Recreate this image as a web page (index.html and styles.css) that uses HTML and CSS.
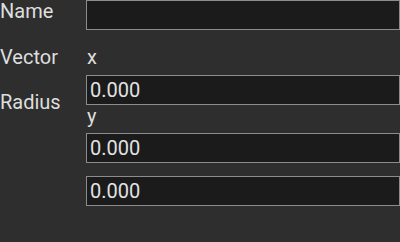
FILE: index.html
```html
<!DOCTYPE html>
<html lang="en">
<head>
    <meta charset="UTF-8">
    <meta name="viewport" content="width=device-width, initial-scale=1.0">
    <title>Properties</title>
    <link rel="stylesheet" href="styles.css">
</head>
<body>
    <div class="props">
        <!-- Label column -->
        <div class="labels">
            <label class="label label-name" for="nameField">Name</label>
            <label class="label label-vector">Vector</label>
            <label class="label">Radius</label>
        </div>

        <!-- Field column -->
        <div class="fields">
            <input class="field field-name" type="text" id="nameField" value="">
            <span class="axis axis-x">x</span>
            <input class="field" type="text" id="vecX" value="0.000">
            <span class="axis axis-y">y</span>
            <input class="field field-y" type="text" id="vecY" value="0.000">
            <input class="field" type="text" id="radius" value="0.000">
        </div>
    </div>
</body>
</html>
```

FILE: styles.css
```css
body {
    margin: 0;
    padding: 0;
    background-color: #2e2e2e;
    font-family: Roboto, "Liberation Sans", sans-serif;
    font-size: 20px;
    color: #dedede;
}
.props {
    display: grid;
    grid-template-columns: 86px 314px;
}
.labels {
    display: flex;
    flex-direction: column;
}
.label {
    line-height: 23px;
}
.label-name {
    height: 30px;
    margin-bottom: 16px;
}
.label-vector {
    margin-bottom: 22px;
}
.fields {
    display: flex;
    flex-direction: column;
}
.axis {
    line-height: 23px;
    padding-left: 1px;
}
.axis-x {
    margin-top: 16px;
    margin-bottom: 6px;
}
.axis-y {
    margin-bottom: 5px;
}
.field {
    box-sizing: border-box;
    width: 100%;
    height: 30px;
    margin: 0;
    padding: 0 3px;
    background-color: #1b1b1b;
    border: 1px solid #8c8c8c;
    border-radius: 0;
    font-family: Roboto, "Liberation Sans", sans-serif;
    font-size: 20px;
    color: #e2e2e2;
    outline: none;
}
.field-y {
    margin-bottom: 13px;
}
```
